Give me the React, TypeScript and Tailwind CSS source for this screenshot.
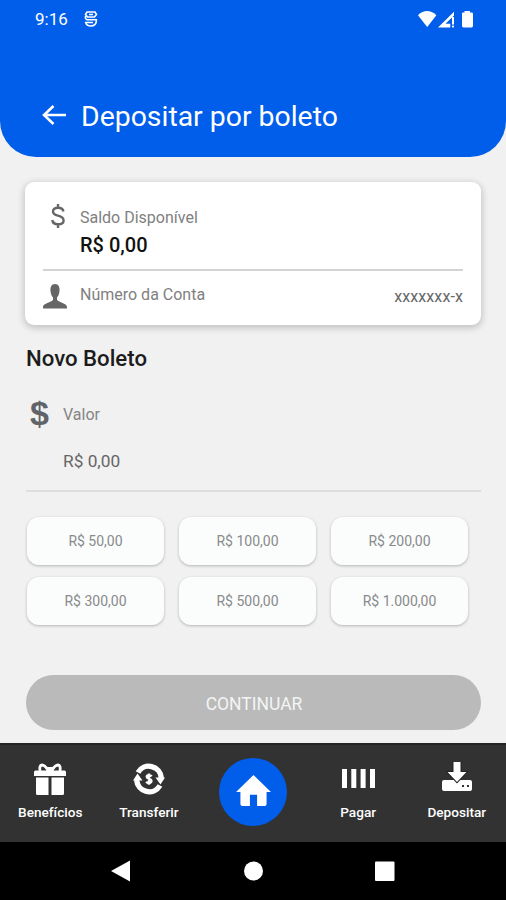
import type { ReactNode } from 'react';

const amounts = ['R$ 50,00', 'R$ 100,00', 'R$ 200,00', 'R$ 300,00', 'R$ 500,00', 'R$ 1.000,00'];

function StatusBar() {
  return (
    <div className="flex h-[38px] items-center justify-between pl-[35px] pr-[33px]">
      <div className="flex items-center">
        <span className="w-[49px] text-[17px] leading-none">9:16</span>
        <svg width="14" height="16" viewBox="0 0 14 16" fill="none" stroke="currentColor" strokeWidth="1.6">
          <path d="M3 1 H11 L12.5 3.5 L10.5 6 H3.5 L1.5 3.5 Z M5 3.5 H9" />
          <path d="M1.5 5 V7.5 L3 8.8 H12.3 V10.5 Q11.5 15 7 15 Q2.5 15 1.7 11.5 H9" />
        </svg>
      </div>
      <svg width="55" height="17" viewBox="0 0 55 17" fill="currentColor">
        <path d="M0 4.2 Q9 -4 18.4 4.2 L9.2 16 Z" />
        <path d="M20 16.4 L36 .8 V4.5 L27.5 12.8 H32.3 V16.4 Z" />
        <rect x="34" y="6" width="2" height="7.5" />
        <rect x="34" y="14.6" width="2" height="1.8" />
        <path d="M44 2.2 Q44 1.6 45 1.6 H46.5 V0 H52 V1.6 H53.5 Q55 1.6 55 3 V15 Q55 16.4 53.5 16.4 H45.5 Q44 16.4 44 15 Z" />
      </svg>
    </div>
  );
}

function NavItem({ label, children }: { label: string; children: ReactNode }) {
  return (
    <button className="flex w-[99px] flex-col items-center text-white">
      <span className="flex h-[39px] items-center justify-center">{children}</span>
      <span className="mt-[4px] text-[13.6px] font-medium leading-[20px]">{label}</span>
    </button>
  );
}

export default function App() {
  return (
    <div className="flex h-[900px] w-[506px] flex-col overflow-hidden bg-[#f1f1f1] font-[Roboto,sans-serif]">
      {/* Header */}
      <header className="h-[157px] shrink-0 rounded-b-[36px] bg-[#005eeb] text-white">
        <StatusBar />
        <div className="mt-[58px] flex h-[40px] items-center pl-[42px]">
          <button className="w-[39px] pb-[3px]">
            <svg width="24" height="20" viewBox="0 0 24 20" fill="none" stroke="currentColor" strokeWidth="2.6">
              <path d="M11.5 1 L2 10 L11.5 19 M2 10 H24" />
            </svg>
          </button>
          <h1 className="pt-[2px] text-[28.4px] leading-none">Depositar por boleto</h1>
        </div>
      </header>

      {/* Balance card */}
      <section className="mx-[25px] mt-[25px] h-[143px] shrink-0 rounded-[9px] bg-white px-[18px] shadow-[0_2px_7px_1px_rgba(0,0,0,0.2)]">
        <div className="flex h-[89px] border-b-2 border-[#d3d3d3] pt-[22px]">
          <svg className="ml-2 mr-[15px]" width="14" height="24" viewBox="0 0 14 24" fill="none" stroke="#666" strokeWidth="2.4">
            <path d="M12.4 7.5 C12.1 4.7 10.1 3.8 7 3.8 C3.9 3.8 2 5 2 7.4 C2 10.2 4 10.9 7 11.6 C10.2 12.4 12.6 13.4 12.6 16.4 C12.6 19 10.2 20.2 7 20.2 C3.5 20.2 1.6 18.8 1.3 16 M7 0 V4 M7 20 V24" />
          </svg>
          <div className="pt-[2px]">
            <p className="text-[16px] leading-[24px] text-[#808080]">Saldo Disponível</p>
            <p className="mt-[2px] text-[20px] font-medium leading-[26px] text-[#111]">R$ 0,00</p>
          </div>
        </div>
        <div className="flex h-[48px] items-center">
          <svg className="mr-[13px] mt-[3px]" width="24" height="25" viewBox="0 0 24 25" fill="#666">
            <path d="M12 0 C15.6 0 16.8 3 16.5 7 C16.2 10.5 15 12.5 14 13.5 V16 C17 18.5 24 19.5 24 23 V24.5 H0 V23 C0 19.5 7 18.5 10 16 V13.5 C9 12.5 7.8 10.5 7.5 7 C7.2 3 8.4 0 12 0 Z" />
          </svg>
          <span className="flex-1 text-[16px] text-[#808080]">Número da Conta</span>
          <span className="mt-1 text-[16px] tracking-[0.1px] text-[#666]">xxxxxxx-x</span>
        </div>
      </section>

      {/* New boleto form */}
      <main className="flex flex-1 flex-col pl-[26px] pr-[25px]">
        <h2 className="mt-[19px] text-[22.2px] font-medium leading-[28px] text-[#1c1c1c]">Novo Boleto</h2>
        <div className="mt-[29px] flex h-[28px] items-center">
          <span className="w-[37px] pb-[4px] pl-1 font-['Liberation_Sans',sans-serif] text-[34px] font-bold leading-none text-[#606468]">$</span>
          <label className="text-[16px] text-[#858585]">Valor</label>
        </div>
        <div className="mt-[19px] h-[44px] border-b-2 border-[#dedede] pl-[37px] pt-[1px] text-[17.3px] leading-[24px] text-[#666]">
          R$ 0,00
        </div>
        <div className="ml-px mt-[25px] grid grid-cols-[137px_137px_137px] gap-x-[15px] gap-y-[12px]">
          {amounts.map((amount) => (
            <button
              key={amount}
              className="h-[48px] rounded-[12px] bg-[#fbfcfc] text-[14px] text-[#888b8b] shadow-[0_1px_3px_rgba(0,0,0,0.25)]"
            >
              {amount}
            </button>
          ))}
        </div>
        <button className="mt-[50px] h-[55px] shrink-0 rounded-full bg-[#bababa] pt-[3px] pl-px text-[17.5px] text-[#f4f4f4]">
          CONTINUAR
        </button>
      </main>

      {/* Bottom navigation */}
      <nav className="flex h-[99px] shrink-0 justify-center border-t-2 border-[#242424] bg-[#323232] pl-px pt-[14px]">
        <NavItem label="Benefícios">
          <svg width="32" height="32" viewBox="0 0 32 32" fill="currentColor">
            <path d="M1.5 7.5 H30.5 Q32 7.5 32 9 V13 H0 V9 Q0 7.5 1.5 7.5 Z" />
            <path d="M2 14.5 H14.5 V32 H3.5 Q2 32 2 30.5 Z M17.5 14.5 H30 V30.5 Q30 32 28.5 32 H17.5 Z" />
            <path d="M14.5 8 Q11 2 8 2 Q5 2.5 6 8 M17.5 8 Q21 2 24 2 Q27 2.5 26 8" fill="none" stroke="currentColor" strokeWidth="2.8" />
            <rect x="12.5" y="4" width="7" height="5" />
          </svg>
        </NavItem>
        <NavItem label="Transferir">
          <svg width="32" height="32" viewBox="0 0 32 32" fill="currentColor">
            <path d="M5 9.5 A12.5 12.5 0 0 1 28.3 15 M27 22.5 A12.5 12.5 0 0 1 3.7 17" fill="none" stroke="currentColor" strokeWidth="5.4" />
            <path d="M22.5 14.5 H32 L27.5 21.5 Z M9.5 17.5 H0 L4.5 10.5 Z" />
            <path d="M18.7 13.4 Q17.8 12.2 16 12.2 Q13.7 12.3 13.7 14 Q13.8 15.4 16 15.9 Q18.5 16.5 18.5 18.2 Q18.3 20 16 20 Q14.1 20 13.2 18.6 M16 10.4 V21.8" fill="none" stroke="currentColor" strokeWidth="2.3" />
          </svg>
        </NavItem>
        <button className="ml-[21px] mr-[22px] -mt-px flex h-[68px] w-[68px] items-center justify-center rounded-full bg-[#005eeb] text-white">
          <svg className="-mt-[3px]" width="35" height="31" viewBox="0 0 36 32" fill="currentColor">
            <path d="M18 0 L36 17.5 H31.5 V30 Q31.5 32 29.5 32 H21.7 V20.5 H14.3 V32 H6.5 Q4.5 32 4.5 30 V17.5 H0 Z" />
          </svg>
        </button>
        <NavItem label="Pagar">
          <svg width="33" height="19" viewBox="0 0 33 19" fill="currentColor">
            <path d="M0 0 H5 V19 H0 Z M9.3 0 H14.3 V19 H9.3 Z M18.6 0 H23.6 V19 H18.6 Z M28 0 H33 V19 H28 Z" />
          </svg>
        </NavItem>
        <NavItem label="Depositar">
          <svg className="-mt-[3px]" width="30" height="30" viewBox="0 0 30 30" fill="currentColor">
            <path fillRule="evenodd" d="M2 18 H28 Q30 18 30 20 V27 Q30 29 28 29 H2 Q0 29 0 27 V20 Q0 18 2 18 Z M20 23 V25 H22 V23 Z M25 23 V25 H27 V23 Z" />
            <path d="M11.5 0 H18.5 V10 H24.5 L15 20 L5.5 10 H11.5 Z" stroke="#222" strokeWidth="2" paintOrder="stroke" />
          </svg>
        </NavItem>
      </nav>

      {/* Android system bar */}
      <footer className="flex h-[58px] shrink-0 items-center bg-black pl-[111px] text-white">
        <svg width="284" height="22" viewBox="0 0 284 22" fill="currentColor">
          <path d="M0 11 L19 0.5 V21.5 Z" />
          <circle cx="142.5" cy="11" r="9.5" />
          <rect x="264" y="1.5" width="19.5" height="19.5" rx="1" />
        </svg>
      </footer>
    </div>
  );
}
